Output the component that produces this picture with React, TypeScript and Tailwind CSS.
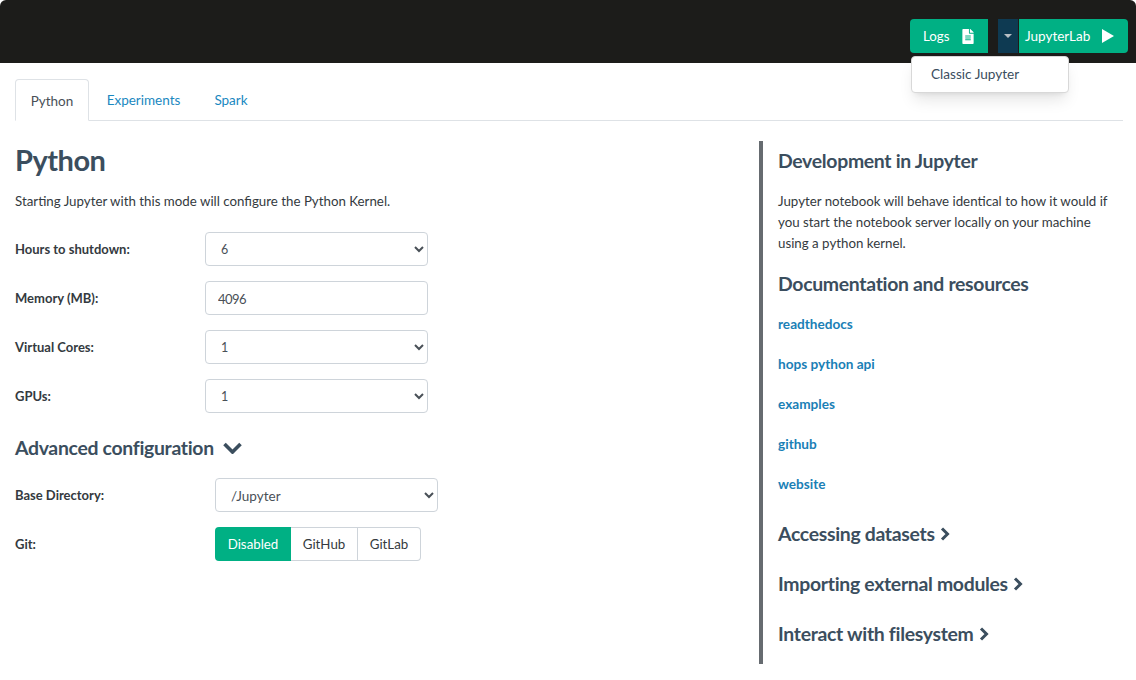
import React from 'react';

const fieldClass =
  'h-[34px] w-[223px] rounded border border-[#ced4da] bg-white pt-px text-[#495057] outline-none';

const SelectRow = ({ label, value }: { label: string; value: string }) => (
  <div className="flex items-center">
    <label className="w-[190px] pt-[2px] text-[13px] font-bold text-[#343a40]">{label}</label>
    <select defaultValue={value} className={`${fieldClass} pl-[11px] text-[12.5px]`}>
      <option>{value}</option>
    </select>
  </div>
);

const ChevronRight = () => (
  <svg viewBox="0 0 10 14" className="h-[14px] w-[10px]" fill="none" stroke="currentColor" strokeWidth="3">
    <path d="M2 1.500 7.500 7 2 12.500" />
  </svg>
);

const ChevronDown = () => (
  <svg viewBox="0 0 19 12" className="h-[12px] w-[19px]" fill="none" stroke="currentColor" strokeWidth="3.6">
    <path d="M1.500 2 9.500 10 17.500 2" />
  </svg>
);

const SideHeading = ({ title }: { title: string }) => (
  <h3 className="flex h-[50px] items-center gap-[5px] text-[19.4px] font-bold tracking-[-0.3px] text-[#3b4e5e]">
    {title}
    <ChevronRight />
  </h3>
);

const links = ['readthedocs', 'hops python api', 'examples', 'github', 'website'];

export default function App() {
  return (
    <div className="h-[680px] w-[1136px] overflow-hidden bg-white font-['Lato',sans-serif] text-[13.3px] text-[#343a40]">
      <header className="flex h-[63px] items-start justify-end rounded-tl-md rounded-tr-md bg-[#1c1c1a] pt-[19px] pr-2">
        <button className="flex h-[34px] w-[78px] items-center gap-[12px] rounded-l bg-[#00b084] pt-px pl-[13px] text-[13.3px] text-white">
          Logs
          <svg viewBox="0 0 384 512" className="h-[15px] w-[12px]" fill="currentColor">
            <path d="M224 136V0H24C10.700 0 0 10.700 0 24v464c0 13.300 10.700 24 24 24h336c13.300 0 24-10.700 24-24V160H248c-13.200 0-24-10.800-24-24zm64 236c0 6.600-5.400 12-12 12H108c-6.600 0-12-5.400-12-12v-8c0-6.600 5.400-12 12-12h168c6.600 0 12 5.400 12 12v8zm0-64c0 6.600-5.400 12-12 12H108c-6.600 0-12-5.400-12-12v-8c0-6.600 5.400-12 12-12h168c6.600 0 12 5.400 12 12v8zm0-72v8c0 6.600-5.400 12-12 12H108c-6.600 0-12-5.400-12-12v-8c0-6.600 5.400-12 12-12h168c6.600 0 12 5.400 12 12zm96-114.100v6.100H256V0h6.100c6.400 0 12.500 2.500 17 7l97.900 98c4.500 4.500 7 10.600 7 16.900z" />
          </svg>
        </button>
        <div className="relative ml-[10px] flex">
          <button className="flex h-[34px] w-[21px] items-center justify-center border-r border-[#1c1c1a] bg-[#0e3a52]">
            <span className="border-x-[4px] border-t-[4px] border-x-transparent border-t-[#b8bec3]" />
          </button>
          <button className="flex h-[34px] w-[109px] items-center gap-[12px] rounded-r bg-[#00b084] pl-[6px] text-[13.5px] text-white">
            JupyterLab
            <svg viewBox="0 0 12 14" className="h-[14px] w-[12px]" fill="currentColor">
              <path d="M0 0 12 7 0 14Z" />
            </svg>
          </button>
          <div className="absolute top-[37px] left-[-87px] flex h-[37px] w-[158px] items-center rounded border border-[#d8d8d8] bg-white pl-[19px] text-[13.6px] text-[#3b4e5e] shadow-lg">
            Classic Jupyter
          </div>
        </div>
      </header>

      <main className="pr-[13px] pl-[15px]">
        <nav className="mt-4 flex h-[42px] border-b border-[#dee2e6] text-[13.5px] leading-[42px]">
          <a className="h-[42px] w-[74px] rounded-t border border-[#dee2e6] border-b-white bg-white text-center text-[#495057]">
            Python
          </a>
          <a className="w-[109px] text-center text-[#1a88bf]">Experiments</a>
          <a className="w-[66px] text-center text-[#1a88bf]">Spark</a>
        </nav>

        <div className="mt-5 flex">
          <section className="w-[744px]">
            <h1 className="-mt-[2px] text-[29px] leading-[41px] font-bold tracking-[-0.5px] text-[#3b4e5e]">Python</h1>
            <p className="mt-[11px] leading-[21px]">Starting Jupyter with this mode will configure the Python Kernel.</p>
            <div className="mt-5 flex flex-col gap-[15px]">
              <SelectRow label="Hours to shutdown:" value="6" />
              <div className="flex items-center">
                <label className="w-[190px] pt-[2px] text-[13px] font-bold">Memory (MB):</label>
                <input readOnly value="4096" className={`${fieldClass} pl-[12px] text-[13px] tracking-[-0.5px]`} />
              </div>
              <SelectRow label="Virtual Cores:" value="1" />
              <SelectRow label="GPUs:" value="1" />
            </div>
            <h2 className="mt-[18px] flex items-center gap-[9px] text-[19.4px] leading-[34px] font-bold tracking-[-0.3px] text-[#3b4e5e]">
              Advanced configuration
              <ChevronDown />
            </h2>
            <div className="mt-[13px] flex items-center">
              <label className="w-[200px] pt-[2px] text-[13px] font-bold">Base Directory:</label>
              <select defaultValue="/Jupyter" className={`${fieldClass} pl-[11px] text-[13.5px]`}>
                <option>/Jupyter</option>
              </select>
            </div>
            <div className="mt-[15px] flex items-center">
              <label className="w-[200px] pt-[2px] text-[13px] font-bold">Git:</label>
              <div className="flex h-[34px] text-[13.3px]">
                <button className="w-[76px] rounded-l bg-[#00b084] pt-px text-white">Disabled</button>
                <button className="w-[67px] border-y border-r border-[#ced4da] pt-px text-[#343a40]">GitHub</button>
                <button className="w-[63px] rounded-r border-y border-r border-[#ced4da] pt-px text-[#343a40]">GitLab</button>
              </div>
            </div>
          </section>

          <aside className="h-[523px] w-[364px] border-l-4 border-[#666b70] pl-[15px]">
            <h3 className="mt-[7px] text-[19.4px] leading-[26px] font-bold tracking-[-0.3px] text-[#3b4e5e]">Development in Jupyter</h3>
            <p className="mt-[17px] w-[335px] leading-[21px]">
              Jupyter notebook will behave identical to how it would if you start the notebook server locally on your machine using a python kernel.
            </p>
            <h3 className="mt-[17px] text-[19.4px] leading-[26px] font-bold tracking-[-0.3px] text-[#3b4e5e]">Documentation and resources</h3>
            <ul className="mt-[7px] flex flex-col">
              {links.map((link) => (
                <li key={link} className="flex h-10 items-center text-[13.6px] font-bold text-[#1a80b6]">
                  {link}
                </li>
              ))}
            </ul>
            <div className="mt-[5px]">
              <SideHeading title="Accessing datasets" />
              <SideHeading title="Importing external modules" />
              <SideHeading title="Interact with filesystem" />
            </div>
          </aside>
        </div>
      </main>
    </div>
  );
}
